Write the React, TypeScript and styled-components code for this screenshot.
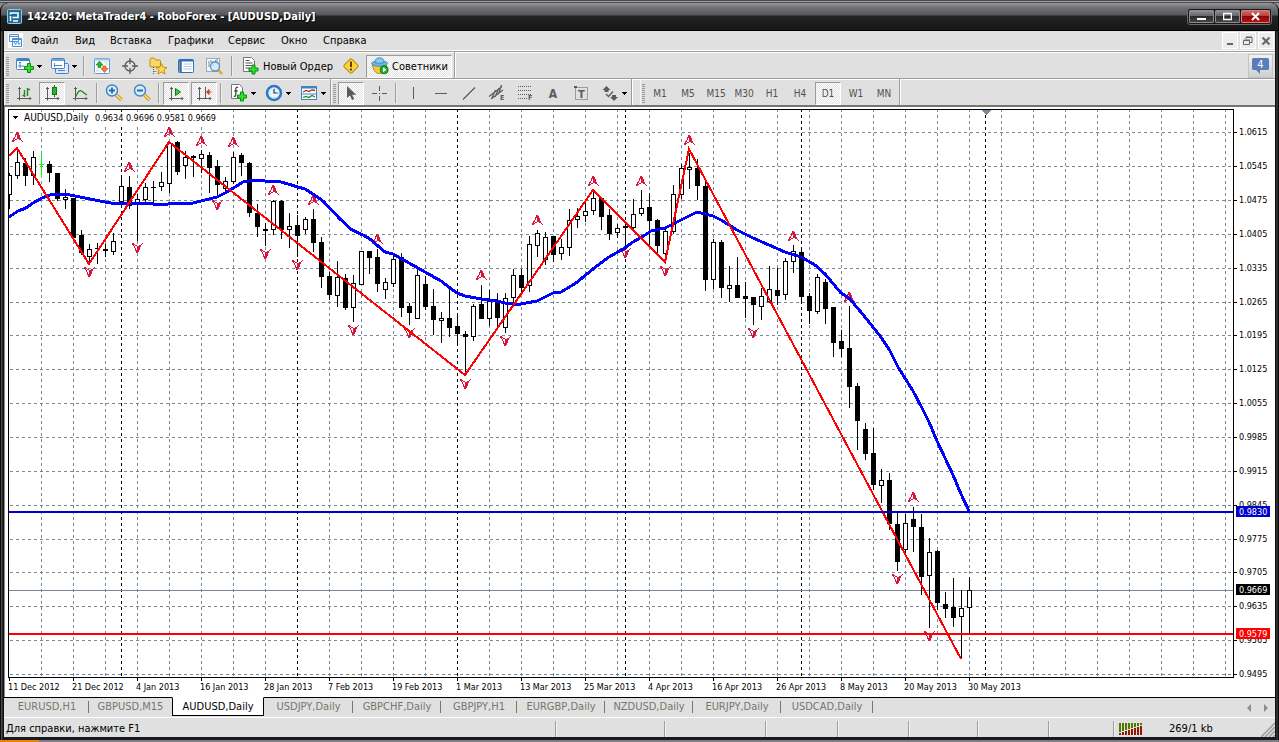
import React from 'react';
import styled, { createGlobalStyle, css } from 'styled-components';

const FONT = '"DejaVu Sans Condensed", "DejaVu Sans", "Liberation Sans", sans-serif';
const FACE = '#e0e0e0';
const SHADE = '#9d9d9d';

const Global = createGlobalStyle`
  * { box-sizing: border-box; }
  body { margin: 0; background: #56565a; font-family: ${FONT}; font-size: 10px; color: #000; }
  button { font: inherit; color: inherit; background: none; border: 0; padding: 0; margin: 0; }
  svg { display: block; flex: none; }
`;

const Screen = styled.div`
  display: flex;
  flex-direction: column;
  min-height: 100vh;
  background: linear-gradient(#4a494c 0 1px, #a3a2a6 1px 2px, #4b4a4e 2px 3px, #8b8b90 3px);
`;
const Frame = styled.div`
  display: flex;
  flex-direction: column;
  flex: 1;
  margin-top: 3px;
  padding: 0 4px 3px;
  border-radius: 8px 8px 0 0;
  background: linear-gradient(90deg, #0b0b0c 0 1px, #4d4d50 1px 2px, #29292b 2px 3px, #111 3px 4px, #1b1b1d 4px calc(100% - 4px), #111 calc(100% - 4px) calc(100% - 3px), #2e2e31 calc(100% - 3px) calc(100% - 1px), #0b0b0c calc(100% - 1px));
  overflow: hidden;
`;
const Backdrop = styled.div`
  height: 2px;
  background: linear-gradient(90deg, #e8820e 0 39px, #807e84 39px);
`;
const TitleBar = styled.header`
  display: flex;
  align-items: center;
  height: 28px;
  margin: 0 -4px;
  padding: 0 6px 0 6px;
  color: #fff;
  border: solid #000;
  border-width: 0 1px 1px;
  border-radius: 8px 8px 0 0;
  background: linear-gradient(#97979b, #6f7073 5px, #55575a 12px, #232425 13px, #161617 27px);
`;
const Title = styled.h1`
  flex: 1;
  margin: 0 0 0 5px;
  font-size: 11px;
  font-weight: bold;
  line-height: 16px;
  text-shadow: 1px 1px 1px #000;
`;
const WindowButtons = styled.div`
  display: flex;
  height: 17px;
  padding: 1px;
  gap: 1px;
  border: 1px solid #6b6b6e;
  border-radius: 3px;
  background: #19191a;
`;
const WindowButton = styled.button<{ $close?: boolean }>`
  display: flex;
  align-items: center;
  justify-content: center;
  width: ${p => (p.$close ? 29 : 25)}px;
  border: 1px solid ${p => (p.$close ? '#d97e7e' : '#8c8c8f')};
  border-radius: 1px;
  background: ${p => (p.$close ? 'linear-gradient(#c96d6d, #b23a3a 50%, #8a0808 50%, #b31212)' : 'linear-gradient(#8d8d90, #606063 50%, #2b2b2d 50%, #454547)')};
`;

const MenuBar = styled.nav`
  display: flex;
  align-items: center;
  height: 19px;
  padding-left: 4px;
  background: ${FACE};
`;
const MenuItem = styled.button<{ $w: number }>`
  width: ${p => p.$w}px;
  padding-left: 8px;
  font-size: 11px;
  line-height: 16px;
  text-align: left;
  white-space: nowrap;
`;
const ChildButtons = styled.div`
  display: flex;
  gap: 2px;
  margin-left: auto;
  padding-right: 1px;
`;
const ChildButton = styled.button`
  display: flex;
  align-items: center;
  justify-content: center;
  width: 16px;
  height: 17px;
  border: 1px solid #fff;
  background: #ececec;
`;

const ToolArea = styled.div`
  border-top: 1px solid #fff;
  border-bottom: 2px solid #74776c;
  background: ${FACE};
`;
const ToolRow = styled.div`
  display: flex;
  align-items: stretch;
  height: 27px;
  border-top: 1px solid ${SHADE};
  box-shadow: inset 0 1px #fff;
`;
const ToolGroup = styled.div<{ $apart?: boolean }>`
  display: flex;
  align-items: center;
  gap: 2px;
  padding: 2px 2px 0 1px;
  border-right: 1px solid ${SHADE};
  border-left: 1px solid #f6f6f6;
  box-shadow: 1px 0 #fff;
  margin-right: ${p => (p.$apart ? 8 : 0)}px;
`;
const Grip = styled.i`
  width: 3px;
  height: 19px;
  background: repeating-linear-gradient(#9a9a9a 0 1px, #ddd 1px 2px);
`;
const Divider = styled.i<{ $wide?: boolean }>`
  width: 2px;
  height: 20px;
  margin: 0 ${p => (p.$wide ? 2 : 1)}px;
  border-left: 1px solid ${SHADE};
  border-right: 1px solid #eee;
`;
const pressed = css`
  border: 1px solid;
  border-color: #9a9a9a #fff #fff #9a9a9a;
  background: repeating-conic-gradient(#fff 0 25%, #e2e2e2 0 50%) 0 0 / 2px 2px;
`;
const ToolButton = styled.button<{ $w?: number; $on?: boolean; $gray?: boolean }>`
  display: flex;
  align-items: center;
  justify-content: ${p => (p.$w && !p.$gray ? 'flex-start' : 'center')};
  gap: 3px;
  width: ${p => p.$w ?? 26}px;
  height: 23px;
  padding-left: ${p => (p.$w ? 4 : 0)}px;
  font-size: ${p => (p.$gray ? 10 : 11)}px;
  color: ${p => (p.$gray ? '#505050' : '#000')};
  border: 1px solid transparent;
  white-space: nowrap;
  ${p => p.$on && pressed}
`;
const Notice = styled.button`
  display: flex;
  align-items: center;
  justify-content: center;
  width: 25px;
  height: 24px;
  margin: 2px 2px 0 auto;
  border: 1px solid #c4c4c4;
  background: linear-gradient(#f2f2f2, #cfcfcf);
`;

const ChartPane = styled.main`
  display: flex;
  flex-direction: column;
  flex: 1;
  padding: 2px 0 0 3px;
  border-left: 1px solid #8d8d8d;
  background: #fff;
`;
const PlotRow = styled.div`
  display: flex;
  flex: 1;
`;
const PlotBox = styled.div`
  display: flex;
  flex: 1;
  min-width: 0;
  min-height: 569px;
  border: 1px solid #000;
`;
const Plot = styled.svg`
  flex: 1;
  min-width: 0;
  width: 100%;
  overflow: hidden;
  font-size: 9px;
`;
const PriceAxis = styled.svg`
  width: 41px;
  overflow: visible;
  font-size: 9px;
`;
const TimeAxis = styled.svg`
  width: 100%;
  height: 19px;
  font-size: 9px;
`;

const TabBar = styled.div`
  display: flex;
  height: 21px;
  padding-left: 1px;
  border-top: 1px solid #000;
  border-bottom: 1px solid #fff;
  background: ${FACE};
`;
const Tab = styled.button<{ $w: number; $on?: boolean; $next?: boolean }>`
  width: ${p => p.$w}px;
  height: 18px;
  line-height: 16px;
  font-size: 11px;
  color: ${p => (p.$on ? '#000' : '#76766c')};
  white-space: nowrap;
  ${p => p.$on
    ? css`
        height: 19px;
        margin-top: -1px;
        border: 1px solid #000;
        border-top-color: #fff;
        background: #fff;
      `
    : css`
        background: linear-gradient(${p.$next ? 'transparent, transparent' : '#76766c, #76766c'}) right 3px / 1px 12px no-repeat;
      `}
`;
const TabArrows = styled.div`
  display: flex;
  align-items: center;
  gap: 3px;
  margin-left: auto;
  padding-right: 2px;
`;
const ArrowButton = styled.button`
  display: flex;
  align-items: center;
  justify-content: center;
  width: 14px;
  height: 16px;
`;

const StatusBar = styled.footer`
  display: flex;
  align-items: center;
  height: 19px;
  padding-top: 2px;
  background: ${FACE};
  font-size: 11px;
  line-height: 16px;
`;
const StatusCell = styled.div<{ $w?: number }>`
  display: flex;
  align-items: center;
  gap: 26px;
  height: 16px;
  width: ${p => (p.$w ? `${p.$w}px` : 'auto')};
  flex: ${p => (p.$w ? 'none' : '1')};
  padding-left: ${p => (p.$w ? 5 : 2)}px;
  white-space: nowrap;
  & + & { border-left: 1px solid ${SHADE}; box-shadow: inset 1px 0 #f4f4f4; }
`;

const INK = '#5b5b5b';

const DropArrow = () => (
  <svg width="5" height="3" shapeRendering="crispEdges"><path d="M0 0h5v1h-1v1h-1v1h-1v-1h-1v-1h-1z" fill="#000" /></svg>
);

const Plus = ({ x, y }: { x: number; y: number }) => (
  <path transform={`translate(${x} ${y})`} d="M3.5.5h3v3h3v3h-3v3h-3v-3h-3v-3h3z" fill="#2fe02f" stroke="#0b8a12" />
);
const Axes = () => (
  <path d="M4.5 3v13.500M2 14.500h14M3 5l1.500-1.500L6 5M14.500 13l1.500 1.500-1.500 1.500" fill="none" stroke={INK} />
);

const icons: Record<string, React.ReactNode> = {
  newChart: (<><rect x="0.5" y="1.5" width="13" height="11" rx="1" fill="#fff" stroke="#3f83c4" /><path d="M1 3h12" stroke="#3f83c4" strokeWidth="2" /><path d="M4 5v6M2 9h6M3 6l1-1 1 1" stroke="#4d83b5" fill="none" /><Plus x={8} y={6} /></>),
  profiles: (<><rect x="4.5" y="6.5" width="13" height="10" rx="1" fill="#dceafb" stroke="#3f83c4" /><path d="M7 13.500h7" stroke="#4d83b5" /><rect x="0.500" y="1.500" width="13" height="10" rx="1" fill="#fff" stroke="#3f83c4" /><path d="M1 3h12" stroke="#6fa6dc" strokeWidth="2" /><path d="M3 8.500h8M3.500 6v4" stroke="#4d83b5" /></>),
  market: (<><rect x="1.5" y="1.500" width="15" height="15" rx="1" fill="#fff" stroke="#5d9bd6" /><path d="M2 2.500h14" stroke="#9cc7ee" strokeWidth="2" /><path d="M6.500 4L10 8H8v2.500H5V8H3z" fill="#27b431" stroke="#0c7c16" strokeWidth=".6" /><path d="M11.500 15.500L8 11.500h2V9h3v2.500h2z" fill="#ff7a3c" stroke="#c8400c" strokeWidth=".6" /><path d="M3 12h3M3 14h4M11 5h4M12 7h3" stroke="#b9c4cf" strokeWidth=".7" /></>),
  crosshair: (<><circle cx="9" cy="9" r="5" fill="none" stroke={INK} strokeWidth="1.300" /><path d="M9 1v6M9 11v6M1 9h6M11 9h6" stroke={INK} strokeWidth="1.300" /></>),
  navigator: (<><path d="M1 3q0-2 2-2h2l1.500 2h4q1 0 1 1v5q0 1-1 1H2q-1 0-1-1z" fill="#fbd768" stroke="#c08f12" /><path d="M4.500 10v7M4.500 14.500h4" stroke="#555" strokeDasharray="1 1" /><path d="M12.500 6.500l1.600 3.700 3.900.3-3 2.600 1 4-3.500-2.200-3.500 2.200 1-4-3-2.600 3.900-.3z" fill="#ffd84c" stroke="#c08a0c" strokeWidth=".9" /></>),
  terminal: (<><rect x="1.500" y="2.500" width="15" height="13" rx="1" fill="#fff" stroke="#2f6fb4" /><path d="M2 3.500h14" stroke="#2f6fb4" strokeWidth="2" /><path d="M3.500 4v11" stroke="#3b6ea5" strokeWidth="2.500" /><path d="M6.500 7h8M6.500 9.500h8M6.500 12h8" stroke="#a8c4e4" /></>),
  tester: (<><rect x="1.500" y="1.500" width="13" height="13" fill="#f3f6fa" stroke="#9aaabb" /><path d="M4 4v6M6 6V3M8 9V4M10.500 3v3M12 2v5" stroke="#77879a" /><circle cx="10" cy="9.500" r="4.500" fill="#cfe6f8" fillOpacity=".85" stroke="#5c93c8" strokeWidth="1.300" /><path d="M13.500 13l3.500 4" stroke="#e2a825" strokeWidth="2.500" /></>),
  order: (<><path d="M1.500.5h8l3 3v11h-11z" fill="#fff" stroke="#777" /><path d="M3.500 3.500h4M3.500 6h7M3.500 8.500h6M3.500 11h4" stroke="#555" strokeWidth="1.200" /><Plus x={6.500} y={7.500} /></>),
  alert: (<><rect x="3.500" y="3.500" width="11" height="11" rx="1.500" transform="rotate(45 9 9)" fill="#fbd23a" stroke="#b88a10" /><path d="M9 4.500v5.500M9 11.500v2" stroke="#5a4200" strokeWidth="2" /></>),
  expert: (<><path d="M1.500 8q1 8.500 7 8.500t7-8.500z" fill="#f3c83a" stroke="#b98a18" /><ellipse cx="8.500" cy="6.500" rx="8" ry="2.800" fill="#6db7e6" stroke="#2f83ba" strokeWidth=".8" /><path d="M4 5.500Q4 .8 8.500.8T13 5.500Q8.500 7.800 4 5.500z" fill="#86c8ee" stroke="#2f83ba" strokeWidth=".8" /><circle cx="13.200" cy="12.800" r="4" fill="#1fb52b" stroke="#0a7d17" /><path d="M12 10.300v5l3.400-2.500z" fill="#fff" /></>),
  bars: (<><Axes /><path d="M9.500 6v7M9.500 11.500H7.500M12.500 4v8M12.500 5.500H15" stroke="#1c8a24" strokeWidth="1.400" /></>),
  candles: (<><Axes /><path d="M11.500 1v12" stroke="#0c7c16" /><rect x="9.500" y="3.500" width="4" height="7" fill="#27b431" stroke="#0c7c16" /></>),
  line: (<><Axes /><path d="M4.500 13Q8 5 10.500 7T16 11" fill="none" stroke="#1c8a24" strokeWidth="1.300" /></>),
  zoomIn: (<><circle cx="7" cy="6.500" r="5.500" fill="#d8edfb" stroke="#3f83c4" strokeWidth="1.400" /><path d="M4 6.500h6M7 3.500v6" stroke="#2c69ad" strokeWidth="1.800" /><path d="M11.500 11l5 5" stroke="#b98414" strokeWidth="3.400" /><path d="M11.500 11l5 5" stroke="#ffd95c" strokeWidth="1.800" /></>),
  zoomOut: (<><circle cx="7" cy="6.500" r="5.500" fill="#d8edfb" stroke="#3f83c4" strokeWidth="1.400" /><path d="M4 6.500h6" stroke="#2c69ad" strokeWidth="1.800" /><path d="M11.500 11l5 5" stroke="#b98414" strokeWidth="3.400" /><path d="M11.500 11l5 5" stroke="#ffd95c" strokeWidth="1.800" /></>),
  scroll: (<><Axes /><path d="M8.500 4.500v7l5-3.500z" fill="#3ccc46" stroke="#0c7c16" /></>),
  shift: (<><Axes /><path d="M10.500 3v11" stroke={INK} /><path d="M16.500 8h-3M14 5.500L11.500 8l2.500 2.500z" fill="#c8400c" stroke="#c8400c" /></>),
  indicator: (<><path d="M1.500.5h8l3 3v11h-11z" fill="#fff" stroke="#777" /><path d="M8 3.500Q6 2.500 5.800 5v6Q5.500 13 3.800 12M4 7h4" fill="none" stroke="#333" strokeWidth="1.200" /><Plus x={7} y={7.500} /></>),
  clock: (<><circle cx="9" cy="9" r="7" fill="#eaf4fd" stroke="#2f78c4" strokeWidth="2.600" /><circle cx="9" cy="9" r="4.600" fill="none" stroke="#8db9e2" strokeWidth=".8" strokeDasharray="1 2" /><path d="M9 5V9h3.500" fill="none" stroke="#333" strokeWidth="1.200" /></>),
  template: (<><rect x="1.500" y="2.500" width="15" height="13" fill="#fff" stroke="#3f83c4" /><path d="M1 3.500h16" stroke="#3f83c4" strokeWidth="2" /><path d="M1 10h16" stroke="#3f83c4" /><path d="M3 8l3-1.500 3 1 3-1.500 3 .5" fill="none" stroke="#9a3a1c" strokeWidth="1.300" /><path d="M3 13.500l3-1 3 1 3-2 3 1.500" fill="none" stroke="#1c8a24" strokeWidth="1.300" /></>),
  pointer: (<path d="M5 2v12l3-2.500 2 4.500 2.200-1-2-4.300h4z" fill={INK} />),
  cross: (<path d="M9.500 2v5M9.500 12v5M2 9.500h5M12 9.500h5M9 9.500h1" stroke={INK} />),
  vline: (<path d="M9.500 3v12" stroke={INK} strokeWidth="1" />),
  hline: (<path d="M3 9.500h12" stroke={INK} />),
  trend: (<path d="M3 15.500L15 3.500" stroke={INK} strokeWidth="1.200" />),
  channel: (<><path d="M1 12.500L14 2.500M3 15L15 6M3.500 15l4-9M7 13l4-9M10.500 10l3-9" stroke={INK} strokeWidth="1.200" /><text x="12" y="16" fontSize="7" fontWeight="bold" fill={INK}>E</text></>),
  fibo: (<><path d="M2 2.500h14M2 6.500h14M2 10.500h14M2 14.500h9" stroke={INK} strokeDasharray="1 1" /><text x="12" y="16" fontSize="7" fontWeight="bold" fill={INK}>F</text></>),
  textA: (<text x="9" y="14" textAnchor="middle" fontSize="12" fontWeight="bold" fill={INK}>A</text>),
  label: (<><rect x="3.500" y="3.500" width="12" height="12" fill="none" stroke={INK} strokeDasharray="1 1" /><path d="M2 2h3v2H2z" fill={INK} /><text x="9.500" y="14" textAnchor="middle" fontSize="11" fontWeight="bold" fill={INK}>T</text></>),
  arrows: (<><path d="M5.500 2L9.500 6L7.500 6V8L3.500 8V6L1.500 6zM13 17l-4-4h2V11h4v2h2z" fill={INK} /><path d="M5 10l2.500 2.500L12 7.500" fill="none" stroke={INK} strokeWidth="1.300" /></>),
};

const Icon = ({ name }: { name: string }) => (
  <svg width="18" height="18" viewBox="0 0 18 18" aria-hidden="true">{icons[name]}</svg>
);
const Tool = ({ name, on, drop }: { name: string; on?: boolean; drop?: boolean }) => (
  <ToolButton aria-label={name} $on={on} $w={drop ? 33 : undefined}>
    <Icon name={name} />
    {drop && <DropArrow />}
  </ToolButton>
);

// Candles, 8px apart: [high, body top, body bottom, low, kind], kind 0 falling, 1 rising, 2 unchanged
const candles: number[][] = [
  [173, 175, 194, 208, 1], [148, 162, 175, 178, 1], [158, 163, 175, 185, 0], [151, 157, 175, 184, 1],
  [153, 164, 164, 177, 2], [161, 164, 172, 181, 0], [173, 173, 198, 200, 0], [189, 197, 199, 208, 1],
  [198, 198, 237, 238, 0], [230, 235, 252, 254, 0], [244, 249, 256, 263, 1], [243, 248, 248, 263, 0],
  [244, 249, 250, 256, 0], [233, 241, 251, 254, 1], [175, 186, 201, 202, 1], [176, 187, 205, 208, 0],
  [194, 199, 204, 240, 1], [183, 187, 199, 201, 1], [181, 187, 187, 203, 0], [172, 182, 186, 190, 1],
  [142, 143, 183, 192, 1], [141, 142, 171, 174, 0], [151, 157, 165, 178, 1], [155, 156, 157, 176, 0],
  [150, 154, 158, 172, 1], [152, 155, 167, 192, 0], [160, 166, 184, 197, 0], [177, 181, 188, 190, 1],
  [152, 157, 181, 183, 1], [153, 155, 162, 175, 0], [162, 163, 212, 216, 0], [204, 213, 226, 236, 0],
  [223, 229, 230, 245, 0], [200, 201, 229, 234, 1], [200, 201, 229, 238, 0], [213, 226, 229, 247, 1],
  [215, 225, 235, 256, 0], [217, 219, 229, 233, 1], [209, 219, 242, 251, 0], [237, 242, 276, 287, 0],
  [272, 276, 294, 299, 0], [261, 277, 295, 306, 1], [274, 278, 307, 309, 0], [275, 283, 307, 321, 1],
  [251, 251, 284, 284, 1], [251, 251, 257, 273, 0], [249, 257, 283, 291, 0], [278, 282, 289, 298, 1],
  [256, 259, 283, 286, 1], [253, 257, 307, 316, 0], [303, 306, 312, 324, 0], [267, 275, 318, 318, 1],
  [276, 284, 306, 309, 0], [289, 306, 319, 334, 0], [312, 318, 320, 342, 1], [287, 318, 327, 336, 0],
  [313, 326, 333, 345, 0], [331, 334, 336, 374, 0], [304, 306, 336, 340, 1], [285, 304, 318, 318, 0],
  [290, 301, 318, 325, 1], [293, 301, 317, 326, 0], [293, 298, 327, 332, 1], [269, 275, 297, 302, 1],
  [269, 275, 287, 293, 0], [236, 244, 285, 291, 1], [230, 233, 245, 256, 1], [232, 237, 259, 264, 1],
  [236, 236, 254, 261, 0], [239, 247, 253, 259, 1], [209, 220, 247, 255, 1], [208, 216, 219, 227, 1],
  [202, 211, 215, 221, 1], [192, 198, 210, 214, 1], [197, 198, 216, 229, 0], [209, 215, 233, 239, 0],
  [224, 228, 232, 237, 1], [224, 226, 227, 246, 0], [199, 214, 227, 228, 1], [190, 208, 213, 215, 1],
  [193, 207, 220, 244, 0], [219, 220, 245, 255, 0], [228, 231, 253, 261, 1], [185, 194, 231, 233, 1],
  [164, 168, 194, 198, 1], [153, 167, 169, 188, 1], [159, 168, 185, 199, 0], [178, 186, 279, 290, 0],
  [239, 242, 279, 288, 1], [240, 242, 287, 297, 0], [266, 285, 288, 301, 1], [257, 285, 297, 297, 0],
  [282, 296, 298, 317, 0], [297, 297, 304, 324, 0], [288, 296, 306, 319, 1], [266, 289, 301, 302, 1],
  [268, 290, 295, 304, 0], [258, 261, 294, 299, 1], [245, 251, 261, 272, 1], [247, 252, 296, 303, 0],
  [293, 296, 310, 323, 0], [274, 277, 311, 313, 1], [279, 282, 308, 323, 0], [307, 307, 342, 356, 0],
  [330, 341, 348, 356, 0], [306, 348, 386, 407, 0], [383, 386, 420, 449, 0], [423, 429, 453, 459, 0],
  [428, 453, 484, 489, 0], [469, 480, 485, 502, 1], [473, 480, 523, 529, 0], [513, 524, 561, 570, 0],
  [514, 523, 549, 553, 1], [507, 519, 526, 551, 0], [514, 527, 576, 594, 0], [538, 552, 575, 627, 1],
  [550, 551, 602, 609, 0], [592, 604, 608, 617, 0], [578, 607, 617, 626, 0], [590, 608, 616, 658, 1],
  [577, 590, 607, 633, 1],
];

const average = '9,217 18,211 26,208 33,203 42,198 50,195 60,194 70,195 90,199 105,202 117,204 133,203 153,204 161,205 168,204 193,203 205,200 217,197 225,193 235,187 243,182 255,180 265,181 281,182 305,189 313,194 323,201 340,219 352,230 363,235 370,239 378,246 385,252 393,254 409,263 425,272 441,281 457,293 465,296 481,299 497,301 505,303 513,304 521,304 537,301 553,293 561,292 576,283 593,269 609,257 625,248 633,242 645,235 651,231 665,228 681,220 697,212 713,216 721,220 737,230 753,238 769,245 785,252 801,257 815,265 825,274 841,293 849,298 860,311 881,337 890,351 898,367 913,391 921,406 929,422 937,441 953,475 961,494 969,511';
const zigzag = '9,156 17,148 89,264 169,142 465,375 593,190 665,262 689,149 961,659';

const peaks = [[17, 137], [129, 167], [169, 132], [201, 141], [233, 142], [273, 190], [313, 200], [377, 239], [481, 275], [537, 220], [593, 181], [641, 181], [689, 140], [793, 236], [849, 297], [913, 497]];
const troughs = [[89, 272], [137, 248], [217, 205], [265, 254], [297, 265], [353, 330], [409, 333], [465, 384], [505, 341], [625, 253], [665, 271], [753, 333], [897, 579], [929, 636]];

const levels = [132, 166, 200, 234, 268, 302, 335, 369, 403, 437, 471, 505, 539, 572, 606, 640, 674];
const prices = ['1.0615', '1.0545', '1.0475', '1.0405', '1.0335', '1.0265', '1.0195', '1.0125', '1.0055', '0.9985', '0.9915', '0.9845', '0.9775', '0.9705', '0.9635', '0.9565', '0.9495'];
const months = [121, 297, 457, 625, 801, 985];
const dates = ['11 Dec 2012', '21 Dec 2012', '4 Jan 2013', '16 Jan 2013', '28 Jan 2013', '7 Feb 2013', '19 Feb 2013', '1 Mar 2013', '13 Mar 2013', '25 Mar 2013', '4 Apr 2013', '16 Apr 2013', '26 Apr 2013', '8 May 2013', '20 May 2013', '30 May 2013'];
const tags = [
  { y: 506, fill: '#0000cd', text: '0.9830' },
  { y: 584, fill: '#000', text: '0.9669' },
  { y: 628, fill: '#f00', text: '0.9579' },
];

const Candle = ({ x, c }: { x: number; c: number[] }) => {
  const [high, top, bottom, low, kind] = c;
  const ink = kind === 2 ? '#00ff00' : '#000';
  return (
    <g>
      <path d={`M${x + 0.5} ${high}V${low + 1}`} stroke={ink} />
      {kind === 1
        ? <rect x={x - 1.5} y={top + 0.5} width="4" height={bottom - top} fill="#fff" stroke={ink} />
        : <rect x={x - 2} y={top} width="5" height={bottom - top + 1} fill={ink} />}
    </g>
  );
};

const Fractal = ({ x, y, down }: { x: number; y: number; down?: boolean }) => (
  <g transform={`translate(${x} ${y}) scale(1 ${down ? -1 : 1})`} shapeRendering="crispEdges">
    <path d="M0-5H1L3-1L4 2L6 5H5L3 3L0 2z" fill="#dc143c" />
    <path d="M0-5L-2 0L-5 5L-2 3L0 2" fill="none" stroke="#dc143c" />
  </g>
);

const columns = Array.from({ length: 90 }, (_, i) => 41 + i * 32);

function PricePlot() {
  return (
    <Plot role="img" aria-label="AUDUSD,Daily">
      <g transform="translate(-9 -110)" shapeRendering="crispEdges">
        <g stroke="#778899" strokeDasharray="3 3">
          {columns.map(x => <line key={x} x1={x + 0.5} x2={x + 0.5} y1="109" y2="3000" />)}
          {levels.map(y => <line key={y} x1="10" x2="4000" y1={y + 0.5} y2={y + 0.5} />)}
        </g>
        <g stroke="#000" strokeDasharray="3 3">
          {months.map(x => <line key={x} x1={x + 0.5} x2={x + 0.5} y1="109" y2="3000" />)}
        </g>
        <path d="M9 590.5H4000" stroke="#778899" />
        {candles.map((c, i) => <Candle key={i} x={9 + i * 8} c={c} />)}
        {peaks.map(([x, y]) => <Fractal key={x} x={x} y={y} />)}
        {troughs.map(([x, y]) => <Fractal key={x} x={x} y={y} down />)}
        <polyline points={average} fill="none" stroke="#00f" strokeWidth="3" strokeLinejoin="round" />
        <polyline points={zigzag} fill="none" stroke="#f00" strokeWidth="2" />
        <path d="M9 512H4000" stroke="#0000cd" strokeWidth="2" />
        <path d="M9 634H4000" stroke="#f00" strokeWidth="2" />
        <path d="M982 110h9l-4.500 5z" fill="#778899" />
        <rect x="10" y="112" width="210" height="12" fill="#fff" />
        <path d="M12 115.500h7l-3.500 4z" fill="#000" />
      </g>
      <text x="15" y="11" fontSize="10">AUDUSD,Daily</text>
      <text x="86" y="11">0.9634 0.9696 0.9581 0.9669</text>
    </Plot>
  );
}

function PriceScale() {
  return (
    <PriceAxis>
      {levels.map((y, i) => (
        <g key={y}>
          <path d={`M0 ${y - 108.5}h3`} stroke="#000" />
          <text x="5" y={y - 106}>{prices[i]}</text>
        </g>
      ))}
      {tags.map(t => (
        <g key={t.text}>
          <rect x="2" y={t.y - 109} width="34" height="11" fill={t.fill} />
          <text x="5" y={t.y - 100} fill="#fff">{t.text}</text>
        </g>
      ))}
    </PriceAxis>
  );
}

function TimeScale() {
  return (
    <TimeAxis>
      {dates.map((d, i) => (
        <g key={d}>
          <path d={`M${1.5 + i * 64} 0v3`} stroke="#000" />
          <text x={i * 64} y="12">{d}</text>
        </g>
      ))}
    </TimeAxis>
  );
}

const menu: [string, number][] = [['Файл', 44], ['Вид', 35], ['Вставка', 58], ['Графики', 60], ['Сервис', 53], ['Окно', 42], ['Справка', 60]];
const frames: string[] = ['M1', 'M5', 'M15', 'M30', 'H1', 'H4', 'D1', 'W1', 'MN'];
const tabs: [string, number][] = [['EURUSD,H1', 84], ['GBPUSD,M15', 83], ['AUDUSD,Daily', 92], ['USDJPY,Daily', 89], ['GBPCHF,Daily', 88], ['GBPJPY,H1', 76], ['EURGBP,Daily', 88], ['NZDUSD,Daily', 88], ['EURJPY,Daily', 88], ['USDCAD,Daily', 92]];
const cells = [109, 101, 72, 71, 69, 71, 65];

export default function App() {
  return (
    <Screen>
      <Global />
      <Frame>
        <TitleBar>
          <svg width="15" height="15">
            <rect x=".5" y=".5" width="14" height="14" rx="1" fill="#1f6b97" stroke="#9cc8de" />
            <path d="M3.500 5.500V4h7.500v4.500H5.500M3.500 7v5M6 12h5" fill="none" stroke="#fff" strokeWidth="1.600" />
          </svg>
          <Title>142420: MetaTrader4 - RoboForex - [AUDUSD,Daily]</Title>
          <WindowButtons>
            <WindowButton aria-label="Minimize"><svg width="9" height="9"><path d="M0 7h9" stroke="#fff" strokeWidth="2" /></svg></WindowButton>
            <WindowButton aria-label="Maximize"><svg width="9" height="9"><path d="M.5 1v6.500h8V1M0 1.500h9" fill="none" stroke="#fff" strokeWidth="1.500" /></svg></WindowButton>
            <WindowButton aria-label="Close" $close><svg width="9" height="9"><path d="M1 1l7 7M8 1L1 8" stroke="#fff" strokeWidth="2" /></svg></WindowButton>
          </WindowButtons>
        </TitleBar>
        <MenuBar>
          <svg width="15" height="15">
            <rect width="15" height="15" fill="#fff" />
            <path d="M1.500 1.500h9v7h-9zM1.500 3.500h9M4.500 5.500h9v8h-9z" fill="#fff" stroke="#4b8fd8" />
            <path d="M4 6.500h10" stroke="#4b8fd8" /><path d="M6 9l1.500 2.500L9.500 8.500l1.500 3 1.500-2" fill="none" stroke="#4b8fd8" />
          </svg>
          {menu.map(([m, w]) => <MenuItem key={m} $w={w}>{m}</MenuItem>)}
          <ChildButtons>
            <ChildButton aria-label="Minimize chart"><svg width="10" height="10"><path d="M2 8h6" stroke="#666" strokeWidth="2" /></svg></ChildButton>
            <ChildButton aria-label="Restore chart"><svg width="10" height="10"><path d="M3 3V1.500h6v5H7M.5 4.500h6v4h-6zM1 4h6M3 1h6" fill="none" stroke="#666" /></svg></ChildButton>
            <ChildButton aria-label="Close chart"><svg width="10" height="10"><path d="M1.500 1.500l7 7M8.500 1.500l-7 7" stroke="#666" strokeWidth="2" /></svg></ChildButton>
          </ChildButtons>
        </MenuBar>
        <ToolArea>
          <ToolRow>
            <ToolGroup>
              <Grip />
              <Tool name="newChart" drop /><Tool name="profiles" drop />
              <Divider $wide />
              <Tool name="market" /><Tool name="crosshair" /><Tool name="navigator" /><Tool name="terminal" /><Tool name="tester" />
              <Divider $wide />
              <ToolButton $w={99}><Icon name="order" />Новый Ордер</ToolButton>
              <Tool name="alert" />
              <ToolButton $w={86} $on><Icon name="expert" />Советники</ToolButton>
            </ToolGroup>
            <Notice aria-label="Messages">
              <svg width="17" height="17">
                <path d="M1.500 0h14q1.500 0 1.500 1.500v9q0 1.500-1.500 1.500H8v4l-4-4H1.500Q0 12 0 10.500v-9Q0 0 1.500 0z" fill="#5b7cb8" />
                <text x="8.500" y="10" textAnchor="middle" fontSize="11" fill="#fff">4</text>
              </svg>
            </Notice>
          </ToolRow>
          <ToolRow>
            <ToolGroup>
              <Grip />
              <Tool name="bars" /><Tool name="candles" on /><Tool name="line" />
              <Divider />
              <Tool name="zoomIn" /><Tool name="zoomOut" />
              <Divider />
              <Tool name="scroll" on /><Tool name="shift" on />
              <Divider />
              <Tool name="indicator" drop /><Tool name="clock" drop /><Tool name="template" drop />
            </ToolGroup>
            <ToolGroup $apart>
              <Grip />
              <Tool name="pointer" on /><Tool name="cross" />
              <Divider />
              <Tool name="vline" /><Tool name="hline" /><Tool name="trend" /><Tool name="channel" /><Tool name="fibo" /><Tool name="textA" /><Tool name="label" />
              <Tool name="arrows" drop />
            </ToolGroup>
            <ToolGroup>
              <Grip />
              {frames.map(f => <ToolButton key={f} $gray $on={f === 'D1'}>{f}</ToolButton>)}
            </ToolGroup>
          </ToolRow>
        </ToolArea>
        <ChartPane>
          <PlotRow>
            <PlotBox><PricePlot /></PlotBox>
            <PriceScale />
          </PlotRow>
          <TimeScale />
        </ChartPane>
        <TabBar>
          {tabs.map(([t, w], i) => <Tab key={t} $w={w} $on={i === 2} $next={i === 1}>{t}</Tab>)}
          <TabArrows>
            <ArrowButton aria-label="Previous"><svg width="5" height="8"><path d="M4 0v8L0 4z" fill="#8d8d8d" /></svg></ArrowButton>
            <ArrowButton aria-label="Next"><svg width="5" height="8"><path d="M0 0v8l4-4z" fill="#8d8d8d" /></svg></ArrowButton>
          </TabArrows>
        </TabBar>
        <StatusBar>
          <StatusCell>Для справки, нажмите F1</StatusCell>
          {cells.map((w, i) => <StatusCell key={i} $w={w} />)}
          <StatusCell $w={148}>
            <svg width="24" height="12" shapeRendering="crispEdges">
              {Array.from({ length: 8 }, (_, i) => (
                <g key={i}>
                  <rect x={i * 3} y="0" width="2" height={9 - i} fill="#4f7a00" />
                  <rect x={i * 3} y={10 - i} width="2" height={2 + i} fill="#921a00" />
                </g>
              ))}
            </svg>
            269/1 kb
          </StatusCell>
          <svg width="14" height="16"><path d="M0 16L14 2M4 16L14 6M8 16l6-6M12 16l2-2" stroke="#999" strokeWidth="1.500" /></svg>
        </StatusBar>
      </Frame>
      <Backdrop />
    </Screen>
  );
}
